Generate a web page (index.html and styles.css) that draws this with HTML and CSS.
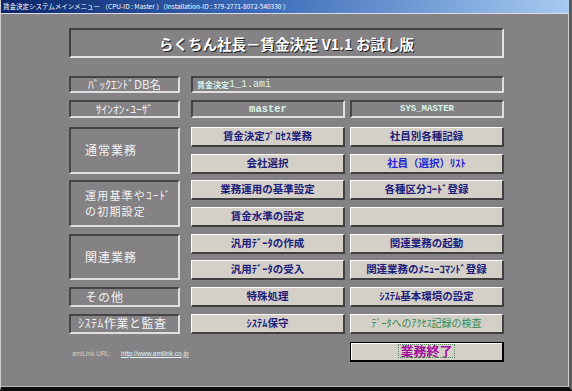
FILE: index.html
```html
<!DOCTYPE html>
<html lang="ja">
<head>
<meta charset="utf-8">
<title>賃金決定システムメインメニュー</title>
<link rel="stylesheet" href="styles.css">
</head>
<body>
<div class="window">
  <div class="titlebar"><span class="title-text">賃金決定システムメインメニュー （CPU-ID : Master ）（Installation-ID : 379-2771-8072-540330 ）</span></div>
  <div class="client">
    <div class="header"><span class="header-text">らくちん社長－賃金決定 V1.1 お試し版</span></div>

    <div class="info">
      <div class="label centered">ﾊﾞｯｸｴﾝﾄﾞDB名</div>
      <div class="field wide">賃金決定<span class="mono-sm">1_1.ami</span></div>
      <div class="label centered">ｻｲﾝｵﾝ･ﾕｰｻﾞ</div>
      <div class="field centered mono">master</div>
      <div class="field centered sys">SYS_MASTER</div>
    </div>

    <div class="menu">
      <div class="label group span2">通常業務</div>
      <button class="btn">賃金決定ﾌﾟﾛｾｽ業務</button>
      <button class="btn">社員別各種記録</button>
      <button class="btn">会社選択</button>
      <button class="btn blue">社員（選択）ﾘｽﾄ</button>

      <div class="label group span2 twoline"><span class="line">運用基準やｺｰﾄﾞ</span><span class="line">の初期設定</span></div>
      <button class="btn">業務運用の基準設定</button>
      <button class="btn">各種区分ｺｰﾄﾞ登録</button>
      <button class="btn">賃金水準の設定</button>
      <button class="btn"></button>

      <div class="label group span2">関連業務</div>
      <button class="btn">汎用ﾃﾞｰﾀの作成</button>
      <button class="btn">関連業務の起動</button>
      <button class="btn">汎用ﾃﾞｰﾀの受入</button>
      <button class="btn">関連業務のﾒﾆｭｰｺﾏﾝﾄﾞ登録</button>

      <div class="label group">その他</div>
      <button class="btn">特殊処理</button>
      <button class="btn">ｼｽﾃﾑ基本環境の設定</button>

      <div class="label group tight">ｼｽﾃﾑ作業と監査</div>
      <button class="btn">ｼｽﾃﾑ保守</button>
      <button class="btn green">ﾃﾞｰﾀへのｱｸｾｽ記録の検査</button>
    </div>

    <div class="footer">
      <div class="link"><span class="link-label">amiLink URL:</span><span class="link-url">http://www.amilink.co.jp</span></div>
      <button class="quit"><span class="quit-text">業務終了</span></button>
    </div>
  </div>
</div>
</body>
</html>
```

FILE: styles.css
```css
* { box-sizing: border-box; }
html, body { margin: 0; padding: 0; }
body {
  width: 572px;
  height: 391px;
  overflow: hidden;
  background: #858285;
  font-family: "Noto Sans CJK JP", "Liberation Sans", sans-serif;
}
.window {
  width: 572px;
  height: 391px;
  display: flex;
  flex-direction: column;
  background: #858285;
  border-left: 1px solid #cfcbcf;
  border-right: 3px solid #5c5a5c;
  border-bottom: 4px solid #0e0e0e;
}
.titlebar {
  height: 14px;
  flex: none;
  background: linear-gradient(to right, #0a246a 0%, #3a6ab8 45%, #a6caf0 100%);
  border-bottom: 1px solid #dcdce4;
  display: flex;
  align-items: center;
  padding-left: 2px;
  overflow: hidden;
}
.title-text {
  color: #ffffff;
  font-size: 6.5px;
  line-height: 13px;
  white-space: nowrap;
}
.client {
  flex: 1;
  display: flex;
  flex-direction: column;
  padding: 14px 0 0 68px;
  border-right: 1px solid #d0ccd0;
  border-bottom: 1px solid #bcb8bc;
}
.header {
  width: 435px;
  height: 30px;
  flex: none;
  border-style: solid;
  border-width: 2px;
  border-color: #404040 #e4e4e4 #e4e4e4 #404040;
  display: flex;
  align-items: center;
  justify-content: center;
  margin-bottom: 18px;
}
.header-text {
  color: #ffffff;
  font-size: 14.5px;
  font-weight: bold;
  letter-spacing: 0;
  text-shadow: 1px 1px 0 #202020;
  white-space: nowrap;
}
.info {
  display: grid;
  grid-template-columns: 117px 154px 154px;
  grid-template-rows: 17px 18px;
  column-gap: 5px;
  row-gap: 7px;
  margin-bottom: 9px;
}
.label {
  width: 111px;
  border-style: solid;
  border-width: 2px;
  border-color: #464446 #e0e0e0 #e0e0e0 #464446;
  color: #f2f2f2;
  font-size: 12px;
  letter-spacing: 0.5px;
  display: flex;
  align-items: center;
  white-space: nowrap;
  line-height: 13px;
}
.label.centered { justify-content: center; font-size: 11.5px; letter-spacing: 0; }
.label.group { padding-left: 14px; letter-spacing: 1px; padding-bottom: 2px; }
.label.tight { padding-left: 7px; letter-spacing: 0.5px; }
.label.twoline {
  flex-direction: column;
  align-items: flex-start;
  justify-content: center;
  padding-bottom: 1px;
  font-size: 11px;
  letter-spacing: 1.2px;
}
.line { display: block; line-height: 16px; height: 16px; }
.span2 { grid-row: span 2; }
.field {
  border-style: solid;
  border-width: 2px;
  border-color: #464446 #e0e0e0 #e0e0e0 #464446;
  color: #d8f6ee;
  font-size: 8px;
  font-weight: bold;
  display: flex;
  align-items: center;
  white-space: nowrap;
}
.field.wide { grid-column: span 2; padding-left: 4px; }
.field.centered { justify-content: center; }
.mono-sm {
  font-family: "Liberation Mono", monospace;
  font-size: 10px;
  font-weight: normal;
}
.mono {
  font-family: "Liberation Mono", monospace;
  font-size: 10.5px;
  font-weight: bold;
}
.sys {
  font-family: "Liberation Mono", monospace;
  font-size: 9px;
  font-weight: bold;
}
.menu {
  display: grid;
  grid-template-columns: 117px 154px 154px;
  grid-auto-rows: 20px;
  column-gap: 5px;
  row-gap: 6.7px;
}
.btn {
  appearance: none;
  margin: 0;
  padding: 0 0 1px 0;
  background: #d4d0c8;
  border-style: solid;
  border-width: 1px 2px 2px 1px;
  border-color: #ffffff #404040 #404040 #ffffff;
  font-family: "Noto Sans CJK JP", sans-serif;
  font-size: 10.5px;
  font-weight: bold;
  color: #1c1c7a;
  white-space: nowrap;
  line-height: 14px;
}
.btn.blue { color: #2424d8; }
.btn.green { color: #2e8a52; font-weight: normal; font-size: 10px; }
.footer {
  display: flex;
  align-items: center;
  height: 20px;
  margin-top: 8px;
}
.link {
  width: 281px;
  padding-left: 3px;
  padding-top: 3px;
  font-family: "Liberation Sans", sans-serif;
  font-size: 6.5px;
  white-space: nowrap;
}
.link-label { color: #d0d0d0; margin-right: 10px; }
.link-url { color: #e0f4f0; text-decoration: underline; }
.quit {
  appearance: none;
  margin: 0;
  padding: 0;
  width: 154px;
  height: 20px;
  background: #d4d0c8;
  border-style: solid;
  border-color: #000000;
  border-width: 1px 2px 2px 1px;
  box-shadow: inset 1px 1px 0 #ffffff;
  display: flex;
  align-items: center;
  justify-content: center;
}
.quit-text {
  font-family: "Noto Sans CJK JP", sans-serif;
  font-size: 13px;
  font-weight: bold;
  color: #a0109a;
  line-height: 12px;
  outline: 1px dotted #5f8a5f;
  padding: 0 1px;
}
```
